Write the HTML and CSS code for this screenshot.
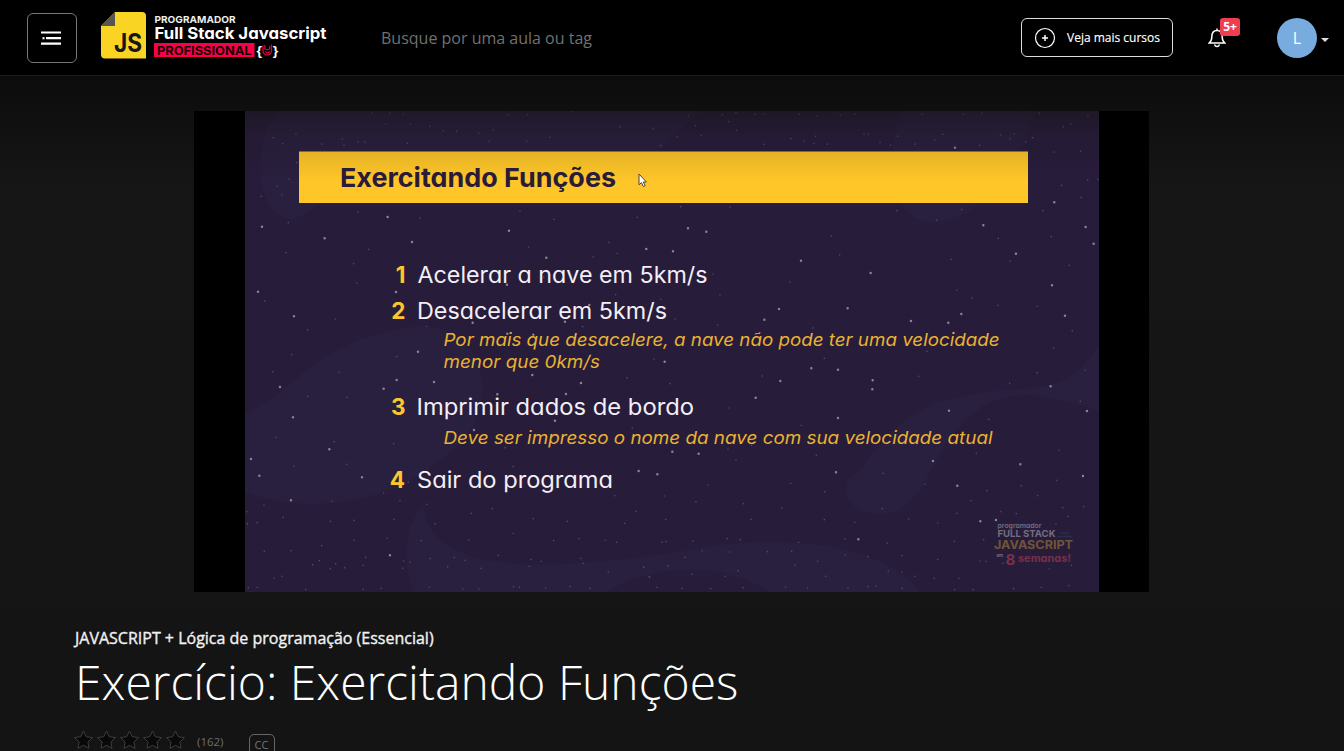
FILE: index.html
```html
<!DOCTYPE html>
<html lang="pt-BR">
<head>
<meta charset="utf-8">
<title>Exercício: Exercitando Funções</title>
<link rel="stylesheet" href="styles.css">
</head>
<body>
<header class="topbar">
  <button class="menu" aria-label="Menu">
    <svg width="20" height="14" viewBox="0 0 20 14" fill="none" stroke="#fff" stroke-width="2.2"><path d="M0 1.5h20M5 7.2h15M0 12.6h20"/><path d="M1.500 7.200h2"/></svg>
  </button>
  <svg class="logo" width="228" height="50" viewBox="100 11 228 50">
    <path d="M115 12h27q4 0 4 4v42.5h-41q-4 0-4-4V26z" fill="#f9d423"/>
    <path d="M115 12v14h-14z" fill="#555"/>
    <g class="brand">
      <text x="114" y="52" font-size="25" font-weight="700" fill="#171717" textLength="28" lengthAdjust="spacingAndGlyphs">JS</text>
      <text x="154.5" y="22.5" font-size="9.6" font-weight="700" fill="#eee" textLength="81" lengthAdjust="spacingAndGlyphs">PROGRAMADOR</text>
      <text x="154.5" y="38.8" font-size="16.3" font-weight="700" fill="#fff" textLength="172" lengthAdjust="spacingAndGlyphs">Full Stack Javascript</text>
      <rect x="154" y="43" width="100.500" height="14" fill="#fb0045"/>
      <text x="157" y="54.600" font-size="12" font-weight="700" fill="#16000a" textLength="94.500" lengthAdjust="spacingAndGlyphs">PROFISSIONAL</text>
      <g class="braces" font-size="13" font-weight="700" fill="#fff">
        <text x="256.500" y="54.700" textLength="5.500" lengthAdjust="spacingAndGlyphs">{</text>
        <text x="272.800" y="54.700" textLength="5.500" lengthAdjust="spacingAndGlyphs">}</text>
      </g>
    </g>
    <path d="M263 46v5q.5 4 4.200 4t4.300-4V45M264.800 45.500v3.500M264.800 49q2.500 1.200 4.800 0V46.500M265.500 51.800q2 1.500 4 0" fill="none" stroke="#d9003d" stroke-width="1.300" stroke-linecap="round"/>
  </svg>
  <div class="search">Busque por uma aula ou tag</div>
  <a class="more">
    <svg width="22" height="22" viewBox="0 0 22 22" fill="none" stroke="#fff"><circle cx="11" cy="11" r="9.500" stroke-width="1.200"/><path d="M11 8v6M8 11h6" stroke-width="1.500"/></svg>
    <span>Veja mais cursos</span>
  </a>
  <div class="bell">
    <svg width="18" height="20" viewBox="0 0 18 20" fill="none" stroke="#fff" stroke-width="1.500"><path d="M1.200 15h15.600c-2-1.500-2.600-3-2.600-6 0-4-1.700-6.500-5.200-6.500s-5.200 2.500-5.200 6.500c0 3-.6 4.500-2.600 6zM9 2.500V.5M6.700 16.500q.3 2 2.300 2t2.300-2"/></svg>
    <span class="badge">5+</span>
  </div>
  <div class="avatar">L</div>
  <span class="caret"></span>
</header>
<main>
  <div class="player">
    <svg class="slide" width="854" height="481" viewBox="245 111 854 481">
      <defs>
        <linearGradient id="shade" x1="0" y1="0" x2="0" y2="1"><stop offset="0" stop-color="#131313" stop-opacity=".48"/><stop offset=".35" stop-color="#131313" stop-opacity=".17"/><stop offset="1" stop-color="#131313" stop-opacity="0"/></linearGradient>
      </defs>
      <rect x="245" y="111" width="854" height="481" fill="#281c3b"/>
      <g fill="#291f3e">
        <path d="M278 111C250 145 256 215 289 219C318 217 323 185 370 180L650 160L700 111z"/>
        <path d="M900 111C885 160 890 221 930 222C982 222 1015 170 1035 111z"/>
        <path d="M245 414C300 390 310 340 420 326C500 330 500 425 440 460C390 505 300 515 245 492z"/>
        <path d="M1099 345C1060 405 1030 380 960 397C890 410 880 455 848 480C836 505 870 520 895 512C940 485 930 440 985 405C1025 385 1060 400 1099 411z"/>
        <path d="M423 505C400 530 405 570 413 592H607C650 565 720 560 770 592H920C890 550 810 535 720 545C600 565 430 590 423 505z"/>
      </g>
      <g class="stars">
        <g transform="translate(190 100) scale(.3333)">
          <path class="dim" d="M545 40h0M640 42h0M600 40h0M318 102h0M278 131h0M250 113h0M457 118h0M525 126h0M505 125h0M396 132h0M462 136h0M587 72h0M661 72h0M720 79h0M760 93h0M800 94h0M866 100h0M910 90h0M955 44h0M1013 44h0M1144 34h0M1290 80h0M1080 112h0M1010 124h0M898 124h0M652 130h0M298 237h0M320 188h0M262 259h0M276 285h0M214 289h0M504 336h0M295 368h0M691 355h0M990 333h0M1092 358h0M1342 352h0M536 448h0M491 491h0M500 549h0M288 458h0M224 603h0M436 657h0M353 689h0M710 679h0M1257 427h0M1282 460h0M1210 471h0M1016 441h0M1277 584h0M1178 680h0M1061 532h0"/>
          <path class="bright" d="M593 351h0M216 380h0M404 415h0M666 426h0M957 392h0M1069 473h0M1369 447h0M204 575h0M618 576h0M312 649h0M951 554h0M848 668h0M1125 665h0M1198 615h0M952 701h0M1030 704h0"/>
        </g>
        <g transform="translate(640 100) scale(.3333)">
          <path class="dim" d="M40 85h0M62 137h0M111 111h0M145 47h0M166 77h0M184 106h0M247 44h0M288 38h0M266 65h0M290 91h0M345 43h0M371 42h0M478 43h0M531 48h0M601 46h0M645 42h0M372 133h0M493 124h0M527 109h0M522 130h0M562 132h0M453 116h0M672 102h0M685 102h0M720 127h0M752 136h0M773 109h0M825 132h0M846 43h0M909 103h0M884 121h0M970 43h0M1026 40h0M1082 105h0M1123 102h0M1110 116h0M1157 125h0M1178 113h0M1019 136h0M1198 40h0M1344 46h0M1293 72h0M1270 80h0M1242 156h0M1322 154h0M122 320h0M270 321h0M771 332h0M890 361h0M965 328h0M1265 256h0M1343 240h0M1374 238h0M1324 292h0M1209 332h0M1234 410h0M1075 415h0M1111 483h0M934 478h0M574 408h0M599 465h0M450 546h0M219 522h0M240 585h0M62 598h0M105 657h0M233 675h0M1074 616h0M1192 619h0M1288 496h0M1297 692h0M950 571h0M997 594h0M519 684h0"/>
          <path class="bright" d="M945 143h0M1243 307h0M144 385h0M199 395h0M99 454h0M483 482h0M692 519h0M1030 376h0M1337 381h0M1361 431h0M1128 461h0M1236 556h0M1275 647h0M964 642h0M925 668h0M813 663h0M623 625h0M417 627h0M373 659h0"/>
        </g>
        <g transform="translate(190 340) scale(.3333)">
          <path class="dim" d="M305 44h0M249 95h0M447 97h0M620 50h0M353 169h0M471 172h0M258 292h0M433 305h0M312 379h0M470 373h0M611 311h0M655 427h0M581 459h0M630 482h0M711 493h0M427 484h0M222 496h0M170 515h0M172 551h0M202 548h0M280 532h0M421 544h0M492 541h0M612 538h0M735 551h0M907 506h0M844 520h0M1030 536h0M1132 544h0M1304 550h0M1338 514h0M970 580h0M1091 602h0M1167 596h0M1246 601h0M1280 607h0M836 600h0M694 602h0M592 595h0M492 601h0M395 617h0M303 632h0M223 634h0M388 662h0M368 674h0M437 671h0M421 686h0M464 683h0M520 676h0M527 652h0M641 663h0M661 667h0M638 685h0M721 656h0M793 653h0M825 661h0M773 680h0M873 685h0M925 646h0M1023 658h0M1054 664h0M1018 679h0M1180 670h0M1173 655h0M1255 697h0M1361 682h0M1378 710h0M252 715h0M276 709h0M175 743h0M202 742h0M347 748h0M574 745h0M520 748h0M718 742h0M819 747h0M867 747h0M971 740h0M988 742h0M1067 744h0M1140 740h0M1200 745h0M1311 113h0M970 380h0M945 323h0M1275 467h0M1327 265h0"/>
          <path class="bright" d="M684 35h0M270 141h0M581 146h0M620 120h0M732 126h0M309 232h0M418 328h0M183 357h0M208 407h0M516 412h0M303 481h0M600 646h0M1027 105h0M1173 129h0M1128 162h0M922 163h0M1095 242h0M852 270h0M1346 393h0"/>
        </g>
        <g transform="translate(640 340) scale(.3333)">
          <path class="dim" d="M42 57h0M90 131h0M367 108h0M553 55h0M268 204h0M484 256h0M264 328h0M288 361h0M335 316h0M529 346h0M203 435h0M73 468h0M168 485h0M310 491h0M425 504h0M452 430h0M555 455h0M77 538h0M333 538h0M553 539h0M644 547h0M806 537h0M893 549h0M727 506h0M855 433h0M729 400h0M1009 340h0M1046 238h0M1321 184h0M1336 91h0M1241 24h0M1192 98h0M1109 130h0M861 34h0M836 109h0M1257 330h0M1144 437h0M1251 421h0M1193 467h0M1041 452h0M993 482h0M951 520h0M1083 515h0M1129 521h0M1269 503h0M1331 500h0M1284 529h0M1248 552h0M66 607h0M78 605h0M158 603h0M262 596h0M301 599h0M187 633h0M270 636h0M135 652h0M84 677h0M11 682h0M29 711h0M156 703h0M255 709h0M294 692h0M382 635h0M455 634h0M476 607h0M465 676h0M533 664h0M557 709h0M615 597h0M616 645h0M684 650h0M742 609h0M786 647h0M745 694h0M786 696h0M825 709h0M893 658h0M883 715h0M943 604h0M1031 599h0M1020 663h0M1038 664h0M1089 670h0M1228 687h0M1294 676h0M957 715h0M944 749h0M1000 749h0M51 742h0M126 745h0M212 746h0M309 743h0M437 742h0M503 744h0M624 743h0M684 740h0M709 738h0M787 745h0M1121 746h0M1204 742h0M1287 737h0"/>
          <path class="bright" d="M74 65h0M514 85h0M594 89h0M421 123h0M698 121h0M697 148h0M347 173h0M594 234h0M927 212h0M1232 139h0M1341 213h0M97 335h0M176 341h0M588 397h0M52 403h0M879 363h0M952 437h0M1141 373h0M1329 408h0M1021 544h0M1068 540h0M655 598h0"/>
        </g>
      </g>
      <rect x="299" y="151.500" width="729" height="51.500" fill="#ffc629"/>
      <rect x="245" y="111" width="854" height="70" fill="url(#shade)"/>
      <g class="brand">
        <text x="340" y="187" font-size="26" font-weight="700" fill="#2a1c39" textLength="276" lengthAdjust="spacingAndGlyphs">Exercitando Funções</text>
        <g font-size="22.500" font-weight="700" fill="#ffc52d" text-anchor="end">
          <text x="405.500" y="283">1</text><text x="405.500" y="318.500">2</text><text x="405.500" y="415">3</text><text x="405" y="488">4</text>
        </g>
        <g font-size="22.500" font-weight="400" fill="#f3eff6">
          <text x="417.500" y="282.700" textLength="290" lengthAdjust="spacingAndGlyphs">Acelerar a nave em 5km/s</text>
          <text x="417" y="318.500" textLength="250" lengthAdjust="spacingAndGlyphs">Desacelerar em 5km/s</text>
          <text x="416.500" y="415" textLength="277.500" lengthAdjust="spacingAndGlyphs">Imprimir dados de bordo</text>
          <text x="417" y="487.800" textLength="196" lengthAdjust="spacingAndGlyphs">Sair do programa</text>
        </g>
        <g font-size="17.500" font-style="italic" fill="#e9b230">
          <text x="443.500" y="345.500" textLength="556" lengthAdjust="spacingAndGlyphs">Por mais que desacelere, a nave não pode ter uma velocidade</text>
          <text x="443.500" y="367.800" textLength="156.500" lengthAdjust="spacingAndGlyphs">menor que 0km/s</text>
          <text x="443.500" y="443.800" textLength="549" lengthAdjust="spacingAndGlyphs">Deve ser impresso o nome da nave com sua velocidade atual</text>
        </g>
        <text x="997.500" y="527.500" font-size="6.500" font-weight="600" fill="#766e80" textLength="44" lengthAdjust="spacingAndGlyphs">programador</text>
        <text x="997.500" y="537" font-size="9.500" font-weight="700" fill="#756d80" textLength="58" lengthAdjust="spacingAndGlyphs">FULL STACK</text>
        <text x="994" y="549" font-size="11.800" font-weight="700" fill="#705438" textLength="79" lengthAdjust="spacingAndGlyphs">JAVASCRIPT</text>
        <text x="996.500" y="557" font-size="5" font-weight="700" fill="#766e80" textLength="6.500" lengthAdjust="spacingAndGlyphs">em</text>
        <text x="1005.500" y="564.500" font-size="15" font-weight="700" fill="#78304b">8</text>
        <text x="1018" y="561.800" font-size="10.500" font-weight="700" fill="#78304b" textLength="53" lengthAdjust="spacingAndGlyphs">semanas!</text>
      </g>
      <path d="M1060 533h9M1057 536.500h15" stroke="#26304a" stroke-width="1.500"/>
      <path d="M639 174v10.800l2.400-2.200 2 4 1.800-.9-1.900-3.700h3.100z" fill="#fff" stroke="#444" stroke-width="1"/>
    </svg>
  </div>
  <section class="info">
    <h2>JAVASCRIPT + Lógica de programação (Essencial)</h2>
    <h1>Exercício: Exercitando Funções</h1>
    <div class="meta">
      <svg width="115" height="20" viewBox="0 0 115 20" fill="#090909" stroke="#3d3d3d" stroke-linejoin="round">
        <defs><path id="star" d="M9.500 1l2.700 5.700 6.300.9-4.600 4.400 1.100 6.300-5.500-3-5.500 3 1.100-6.300L.5 7.600l6.300-.9z"/></defs>
        <use href="#star"/><use href="#star" x="23"/><use href="#star" x="46"/><use href="#star" x="69"/><use href="#star" x="92"/>
      </svg>
      <span class="votes">(162)</span>
      <span class="cc">CC</span>
    </div>
  </section>
</main>
</body>
</html>
```
FILE: styles.css
```css
* { box-sizing: border-box; }
html, body { height: 100%; }
body {
  margin: 0;
  overflow: hidden;
  background: #141414;
  color: #fff;
  font-family: "Open Sans", "Noto Sans", sans-serif;
}
.topbar {
  display: flex;
  align-items: center;
  height: 76px;
  padding: 0 15px 0 27px;
  background: #000;
  border-bottom: 1px solid #1a1a1a;
}
.menu {
  display: grid;
  place-items: center;
  width: 50px;
  height: 50px;
  margin-top: 1px;
  padding: 0 2px 0 0;
  background: none;
  border: 1px solid #777;
  border-radius: 6px;
}
.logo { margin: -3px 0 0 23px; }
.brand { font-family: Inter, "Open Sans", sans-serif; font-feature-settings: "cv11" 1; }
.braces { font-family: "Liberation Sans", sans-serif; }
.stars { fill: none; stroke-linecap: round; }
.dim { stroke: #514761; stroke-width: 5; }
.bright { stroke: #8a8296; stroke-width: 7.5; }
.search { flex: 1; margin-left: 53px; font-size: 16px; color: #717171; }
.more {
  display: flex;
  align-items: center;
  gap: 11px;
  width: 152px;
  height: 39px;
  padding-left: 12px;
  border: 1px solid #ddd;
  border-radius: 6px;
  font-size: 12px;
  white-space: nowrap;
  -webkit-text-stroke: .15px #fff;
}
.bell { position: relative; height: 20px; margin-left: 35px; }
.bell svg { display: block; }
.badge {
  position: absolute;
  left: 12px;
  top: -10px;
  width: 20px;
  height: 18px;
  border-radius: 3px;
  background: #ef3e50;
  font-size: 12px;
  font-weight: 700;
  line-height: 18px;
  text-align: center;
}
.avatar {
  width: 40px;
  height: 40px;
  margin-left: 51px;
  border-radius: 50%;
  background: #78acde;
  font-size: 16px;
  line-height: 41px;
  text-align: center;
}
.caret {
  margin: 4px 0 0 4px;
  border: 4px solid transparent;
  border-top-color: #ddd;
  border-bottom: 0;
}
main {
  height: 675px;
  padding-top: 35px;
  background: linear-gradient(#0c0c0c, #161616 110px, #141414 100%);
}
.player {
  display: flex;
  justify-content: center;
  width: 955px;
  height: 481px;
  margin: 0 auto 0 194px;
  background: #000;
}
.slide { display: block; }
.info { padding: 33px 75px 0; }
h2 {
  margin: 0;
  font-size: 16px;
  font-weight: 400;
  line-height: 26px;
  color: #f2f2f2;
  -webkit-text-stroke: .35px #f2f2f2;
}
h1 { margin: 0; font-size: 48px; font-weight: 300; line-height: 61px; }
.meta { display: flex; align-items: flex-start; margin: 19px 0 0 -1px; height: 30px; }
.meta svg { margin-top: -1px; }
.votes { margin-left: 8px; font-size: 11.5px; line-height: 22px; color: #6e6e6e; }
.cc {
  width: 26px;
  height: 22px;
  margin: 3px 0 0 25px;
  border: 1px solid #666;
  border-radius: 5px;
  font-size: 11px;
  line-height: 20px;
  text-align: center;
  color: #757575;
}
```
